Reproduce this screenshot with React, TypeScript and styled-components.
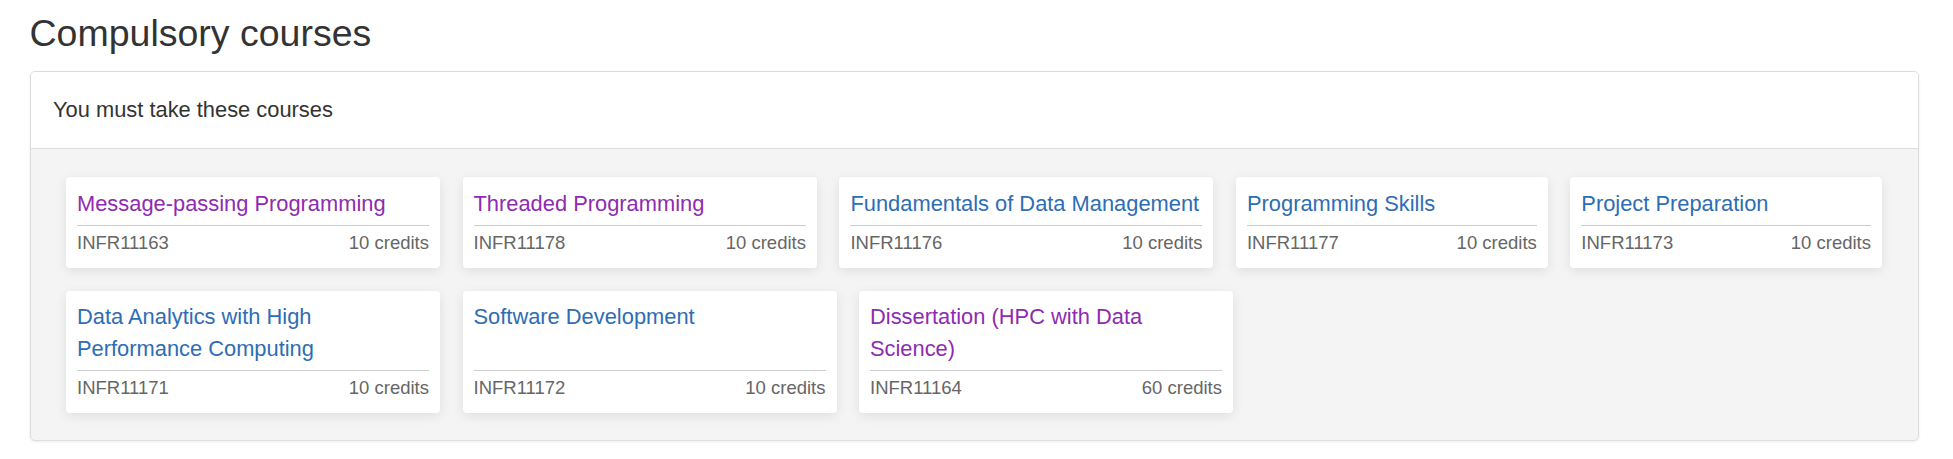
import React from "react";
import styled, { createGlobalStyle } from "styled-components";

const GlobalStyle = createGlobalStyle`
  html, body {
    margin: 0;
    padding: 0;
    background: #ffffff;
  }
  body {
    font-family: "Liberation Sans", Arial, Helvetica, sans-serif;
    color: #333333;
    font-size: 17.5px;
    line-height: 1.42857;
  }
  * { box-sizing: border-box; }
`;

const Page = styled.div`
  padding: 13px 34px 20px 29.5px;
`;

const Heading = styled.h2`
  margin: 0 0 17px 0;
  font-size: 37.5px;
  font-weight: 400;
  line-height: 1.1;
  color: #333333;
`;

const Panel = styled.section`
  border: 1px solid #dddddd;
  border-radius: 5px;
  background: #f4f4f4;
  box-shadow: 0 1px 3px rgba(0, 0, 0, 0.08);
  overflow: hidden;
`;

const PanelHeader = styled.div`
  background: #ffffff;
  border-bottom: 1px solid #dddddd;
  padding: 22px 22.5px 22.5px;
  font-size: 21.875px;
  line-height: 31.25px;
  color: #333333;
`;

const PanelBody = styled.div`
  padding: 28px 36px 27.5px 35.5px;
`;

const CardGrid = styled.div`
  display: flex;
  flex-wrap: wrap;
  gap: 23px 22.5px;
`;

const Card = styled.div`
  flex: 1 1 auto;
  max-width: 374px;
  display: flex;
  flex-direction: column;
  background: #ffffff;
  border-radius: 4px;
  padding: 10.5px 11px 11px;
  box-shadow: 0 3px 12px rgba(0, 0, 0, 0.09);
`;

const CardTitle = styled.a<{ $visited?: boolean }>`
  flex: 1 1 auto;
  display: block;
  margin-bottom: 6.5px;
  font-size: 21.875px;
  line-height: 31.25px;
  text-decoration: none;
  color: ${(p) => (p.$visited ? "#8e2bb0" : "#2e6db4")};
  cursor: pointer;
`;

const CardFooter = styled.div`
  display: flex;
  justify-content: space-between;
  gap: 16px;
  border-top: 1px solid #cccccc;
  padding-top: 4px;
  font-size: 18.5px;
  line-height: 26.5px;
  color: #666666;
  white-space: nowrap;
`;

type Course = {
  title: string;
  code: string;
  credits: number;
  visited?: boolean;
};

const courses: Course[] = [
  { title: "Message-passing Programming", code: "INFR11163", credits: 10, visited: true },
  { title: "Threaded Programming", code: "INFR11178", credits: 10, visited: true },
  { title: "Fundamentals of Data Management", code: "INFR11176", credits: 10 },
  { title: "Programming Skills", code: "INFR11177", credits: 10 },
  { title: "Project Preparation", code: "INFR11173", credits: 10 },
  { title: "Data Analytics with High Performance Computing", code: "INFR11171", credits: 10 },
  { title: "Software Development", code: "INFR11172", credits: 10 },
  { title: "Dissertation (HPC with Data Science)", code: "INFR11164", credits: 60, visited: true },
];

export default function App() {
  return (
    <>
      <GlobalStyle />
      <Page>
        <Heading>Compulsory courses</Heading>
        <Panel>
          <PanelHeader>You must take these courses</PanelHeader>
          <PanelBody>
            <CardGrid>
              {courses.map((c) => (
                <Card key={c.code}>
                  <CardTitle $visited={c.visited}>{c.title}</CardTitle>
                  <CardFooter>
                    <span>{c.code}</span>
                    <span>{c.credits} credits</span>
                  </CardFooter>
                </Card>
              ))}
            </CardGrid>
          </PanelBody>
        </Panel>
      </Page>
    </>
  );
}
